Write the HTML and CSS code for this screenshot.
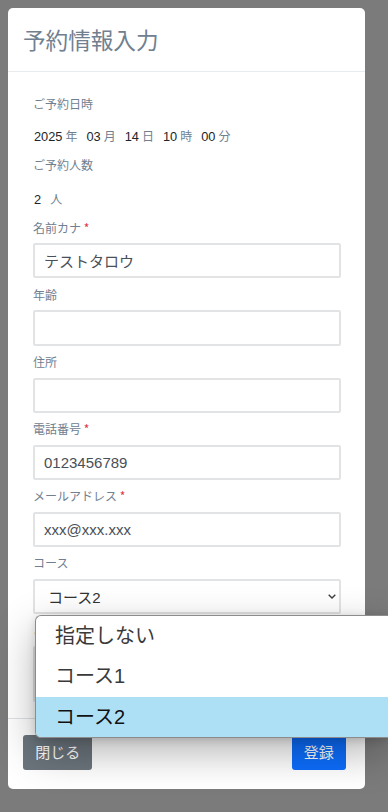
FILE: index.html
```html
<!DOCTYPE html>
<html lang="ja">
<head>
<meta charset="utf-8">
<title>予約情報入力</title>
<link rel="stylesheet" href="styles.css">
</head>
<body>
<div class="modal">
  <div class="modal-header">
    <h1 class="title">予約情報入力</h1>
  </div>
  <div class="modal-body">
    <div class="label label-date">ご予約日時</div>
    <div class="datetime">
      <span class="part"><span class="num">2025</span><span class="unit">年</span></span>
      <span class="part"><span class="num">03</span><span class="unit">月</span></span>
      <span class="part"><span class="num">14</span><span class="unit">日</span></span>
      <span class="part"><span class="num">10</span><span class="unit">時</span></span>
      <span class="part"><span class="num">00</span><span class="unit">分</span></span>
    </div>
    <div class="label label-people">ご予約人数</div>
    <div class="people"><span class="num">2</span><span class="unit">人</span></div>

    <div class="field">
      <label class="label">名前カナ <span class="req">*</span></label>
      <input class="control" type="text" value="テストタロウ">
    </div>
    <div class="field">
      <label class="label">年齢</label>
      <input class="control" type="text" value="">
    </div>
    <div class="field">
      <label class="label">住所</label>
      <input class="control" type="text" value="">
    </div>
    <div class="field">
      <label class="label">電話番号 <span class="req">*</span></label>
      <input class="control" type="text" value="0123456789">
    </div>
    <div class="field">
      <label class="label">メールアドレス <span class="req">*</span></label>
      <input class="control" type="text" value="xxx@xxx.xxx">
    </div>
    <div class="field select-field">
      <label class="label">コース</label>
      <div class="control select">
        <span class="select-value">コース2</span>
        <svg class="chevron" width="8" height="5" viewBox="0 0 8 5"><polyline points="0.7,0.7 4,4 7.3,0.7" fill="none" stroke="#3d3d3d" stroke-width="1.4"/></svg>
      </div>
      <div class="dropdown">
        <div class="option">指定しない</div>
        <div class="option">コース1</div>
        <div class="option selected">コース2</div>
      </div>
    </div>
    <div class="field">
      <label class="label">ご要望</label>
      <textarea class="control textarea"></textarea>
    </div>
  </div>
  <div class="modal-footer">
    <button class="btn btn-secondary" type="button">閉じる</button>
    <button class="btn btn-primary" type="button">登録</button>
  </div>
</div>
</body>
</html>
```

FILE: styles.css
```css
html {
  overflow: hidden;
}
body {
  margin: 0;
  height: 812px;
  overflow: hidden;
  background: #7b7b7b;
  font-family: "Liberation Sans", "Noto Sans CJK JP", sans-serif;
  color: #212529;
}
.modal {
  margin: 8px 0 0 8px;
  width: 357px;
  background: #fff;
  border-radius: 5px;
}
.modal-header {
  box-sizing: border-box;
  height: 64px;
  padding: 15px 16px 0 15px;
  border-bottom: 1px solid #e9ecef;
}
.title {
  margin: 0;
  font-size: 22.6px;
  line-height: 33px;
  height: 33px;
  font-weight: normal;
  color: #708090;
  font-family: "Noto Sans CJK JP", sans-serif;
}
.modal-body {
  padding: 22.4px 24px 9.9px 25px;
}
.label {
  display: block;
  height: 19.2px;
  font-size: 12px;
  line-height: 19.2px;
  color: #708090;
  font-family: "Noto Sans CJK JP", sans-serif;
  overflow: visible;
}
.req {
  color: #dc3545;
}
.label-date {
  margin-bottom: 12.8px;
}
.datetime {
  display: flex;
  gap: 9px;
  height: 19.2px;
  line-height: 19.2px;
  margin-bottom: 9.8px;
  padding-left: 1px;
}
.part {
  display: inline-flex;
  gap: 3px;
  align-items: baseline;
}
.num {
  font-family: "Liberation Sans", sans-serif;
  font-size: 12.8px;
  color: #212529;
}
.unit {
  font-family: "Noto Sans CJK JP", sans-serif;
  font-size: 12px;
  color: #708090;
}
.label-people {
  margin-bottom: 14.1px;
}
.people {
  display: flex;
  gap: 9px;
  align-items: baseline;
  height: 19.2px;
  line-height: 19.2px;
  margin-bottom: 9.8px;
  padding-left: 1px;
}
.field {
  margin-bottom: 6.4px;
}
.field .label {
  margin-bottom: 6.4px;
}
.control {
  display: block;
  box-sizing: border-box;
  width: 100%;
  height: 35.2px;
  margin: 0;
  padding: 0 9px;
  border: 2px solid #e1e3e5;
  border-radius: 2px;
  background: #fff;
  font-family: "Liberation Sans", "Noto Sans CJK JP", sans-serif;
  font-size: 15px;
  color: #495057;
  outline: none;
}
.textarea {
  height: 55.5px;
  resize: none;
}
.select-field {
  position: relative;
}
.select {
  display: flex;
  align-items: center;
  justify-content: space-between;
  padding: 0 3px 0 13px;
  color: #333;
}
.chevron {
  display: block;
}
.dropdown {
  position: absolute;
  top: calc(100% + 1px);
  left: 2px;
  width: 353px;
  box-sizing: border-box;
  background: #fff;
  border: 1px solid #8c8c8c;
  border-right: 0;
  border-radius: 6px 0 0 6px;
  overflow: hidden;
  box-shadow: 0 14px 40px rgba(0, 0, 0, 0.3), 0 2px 8px rgba(0, 0, 0, 0.14);
  z-index: 10;
}
.option {
  height: 40.3px;
  line-height: 40.3px;
  padding-left: 19px;
  font-size: 20px;
  color: #3a3a3a;
  font-family: "Liberation Sans", "Noto Sans CJK JP", sans-serif;
  white-space: nowrap;
}
.option.selected {
  background: #ade0f5;
  color: #111;
}
.modal-footer {
  display: flex;
  justify-content: space-between;
  align-items: center;
  border-top: 1px solid #dee2e6;
  padding: 16px 19.3px 19px 15.3px;
}
.btn {
  height: 35px;
  padding: 0 12px;
  border: 0;
  border-radius: 3px;
  font-family: "Liberation Sans", "Noto Sans CJK JP", sans-serif;
  font-size: 15px;
  line-height: 35px;
  color: #fff;
}
.btn-secondary {
  background: #6c757d;
}
.btn-primary {
  background: #0d6efd;
}
```
